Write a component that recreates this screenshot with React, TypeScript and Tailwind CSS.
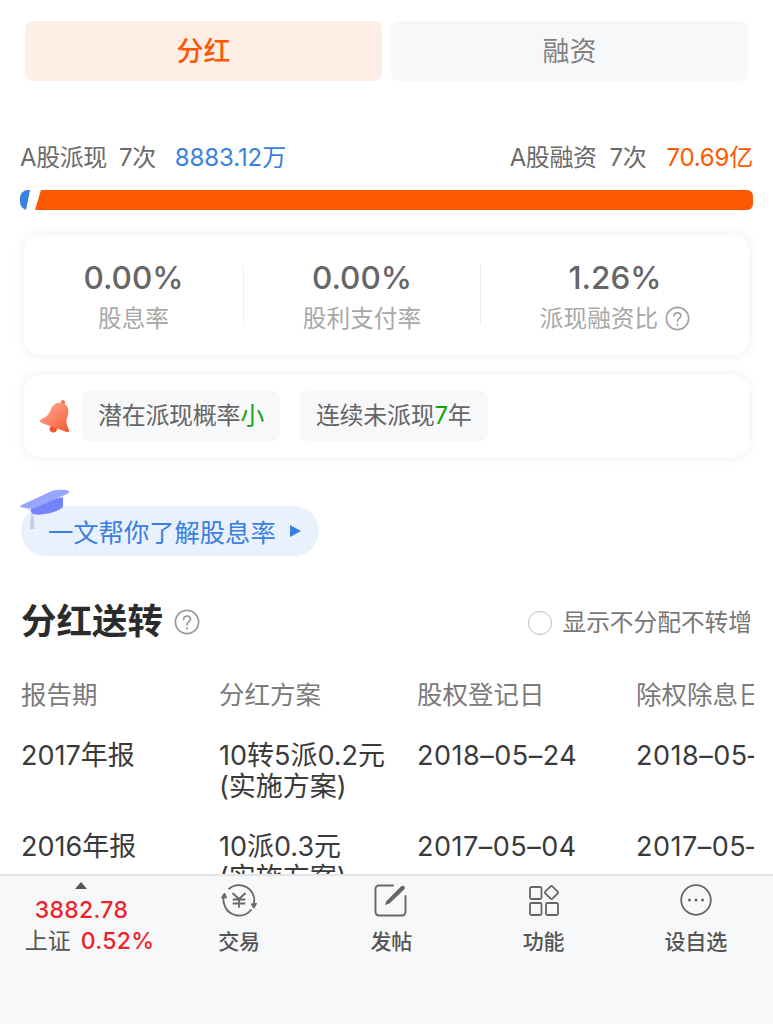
import React from "react";

const FONT = "[font-family:Inter,'Noto_Sans_CJK_SC',sans-serif]";

function Help({ size = 26, color = "#a3a3a3" }: { size?: number; color?: string }) {
  return (
    <svg width={size} height={size} viewBox="0 0 26 26" fill="none" className="shrink-0">
      <circle cx="13" cy="13" r="11.6" stroke={color} strokeWidth="1.7" />
      <path d="M9.6 10.4c0-2 1.5-3.3 3.5-3.3s3.4 1.2 3.4 3c0 1.4-.8 2.1-1.8 2.8-1 .7-1.6 1.2-1.6 2.500v.6" stroke={color} strokeWidth="1.7" strokeLinecap="round" />
      <circle cx="13" cy="19.4" r="1.1" fill={color} />
    </svg>
  );
}

function Bell() {
  return (
    <svg width="36" height="36" viewBox="0 0 36 36" className="shrink-0">
      <defs>
        <linearGradient id="bellG" x1="0" y1="0.2" x2="1" y2="0.7">
          <stop offset="0" stopColor="#ffa68e" />
          <stop offset="1" stopColor="#f4613a" />
        </linearGradient>
      </defs>
      <g transform="translate(1 0) rotate(20 18 18)">
        <circle cx="18" cy="31.500" r="3.800" fill="#ec5a30" />
        <circle cx="18" cy="3.500" r="2.200" fill="#f47a5a" />
        <path d="M18 4.500c-6.500 0-9 4.800-9 10.500 0 5-1.500 8-4.500 10.500-1.500 1.300-2 2-2 3 0 1.200 1 1.500 2 1.500h27c1 0 2-.3 2-1.500 0-1-.5-1.700-2-3-3-2.500-4.500-5.500-4.500-10.500 0-5.700-2.500-10.500-8.500-10.500Z" fill="url(#bellG)" />
      </g>
    </svg>
  );
}

function Hat() {
  return (
    <svg width="50" height="42" viewBox="0 0 50 42" className="absolute left-0 top-0">
      <path d="M5 17 12 23V29" stroke="#c3cbf5" strokeWidth="1.200" fill="none" />
      <path d="M10.800 27h2.800l1.200 13H9.800Z" fill="#c6cfe8" />
      <path d="M11 15 43 8v10c-4 4.500-19 8.500-28 7.500-2.500-.3-3.500-1.500-4-3Z" fill="#7483fb" />
      <path d="M.5 16.500 33 1.500c5-1 11-1 15.500 0 .8 1 .5 2.200-.5 3L15 19c-4 .8-10 .3-14.500-1-.5-.5-.5-1 0-1.500Z" fill="#97a5fd" />
    </svg>
  );
}

function TradeIcon() {
  return (
    <svg width="38" height="34" viewBox="0 0 38 34" fill="none" stroke="#666" strokeWidth="1.800" strokeLinecap="round" strokeLinejoin="round">
      <path d="M9 5.800A15.500 15.500 0 0 1 33.800 13.500 15 15 0 0 1 34 20" />
      <path d="M31 27A15.500 15.500 0 0 1 4 20.500 15 15 0 0 1 3.800 13" />
      <path d="M1.500 14.500 4.500 10 6.500 14.500Z" fill="#666" strokeWidth="1" />
      <path d="M31.500 21 36.500 20.500 34 25Z" fill="#666" strokeWidth="1" />
      <path d="M13 10.500 19 16l6-5.500M19 16v8M13.500 16.500h11M13.500 20.500h11" />
    </svg>
  );
}

function EditIcon() {
  return (
    <svg width="34" height="34" viewBox="0 0 34 34" fill="none" stroke="#666" strokeWidth="1.900" strokeLinecap="round">
      <path d="M19 2.500H5A3.500 3.500 0 0 0 1.500 6v23A3.500 3.500 0 0 0 5 32.500h23a3.500 3.500 0 0 0 3.500-3.500V13" />
      <path d="M11 22 12.500 18 27 3.500c1-1 2.500-1 3.300-.2.800.8.800 2.200-.2 3.200L15.500 20.500Z" fill="#666" stroke="none" />
    </svg>
  );
}

function GridIcon() {
  return (
    <svg width="32" height="32" viewBox="0 0 32 32" fill="none" stroke="#666" strokeWidth="1.800">
      <rect x="2" y="3" width="11.500" height="12" rx="1.500" />
      <rect x="2" y="19" width="11.500" height="12" rx="1.500" />
      <rect x="18" y="19" width="12" height="12" rx="1.500" />
      <rect x="-5" y="-5" width="10" height="10" rx="1.200" transform="translate(23.500 8.500) rotate(45)" />
    </svg>
  );
}

function DotsIcon() {
  return (
    <svg width="34" height="34" viewBox="0 0 34 34" fill="none">
      <circle cx="17" cy="17" r="14.800" stroke="#666" strokeWidth="1.800" />
      <circle cx="10.500" cy="17" r="1.500" fill="#666" />
      <circle cx="17" cy="17" r="1.500" fill="#666" />
      <circle cx="23.500" cy="17" r="1.500" fill="#666" />
    </svg>
  );
}

function Stat({ value, label, help }: { value: string; label: string; help?: boolean }) {
  return (
    <div className="flex flex-col items-center pt-[5px]">
      <div className="text-[31.500px] leading-[38px] font-medium text-[#666]">{value}</div>
      <div className="mt-[4px] flex items-center gap-[7px] text-[23.700px] leading-[36px] text-[#a8a8a8]">
        {label}
        {help && <Help size={25} />}
      </div>
    </div>
  );
}

function Row({ cols, second }: { cols: string[]; second: string }) {
  return (
    <div className="grid grid-cols-[198px_198px_219px_160px] text-[27px] leading-[31px] text-[#3a3a3a] whitespace-nowrap">
      <div>{cols[0]}</div>
      <div>
        <div>{cols[1]}</div>
        <div>{second}</div>
      </div>
      <div className="tracking-[0.5px]">{cols[2]}</div>
      <div className="tracking-[0.5px]">{cols[3]}</div>
    </div>
  );
}

function NavItem({ icon, label }: { icon: React.ReactNode; label: string }) {
  return (
    <div className="flex flex-1 flex-col items-center">
      <div className="flex h-[36px] items-center justify-center">{icon}</div>
      <div className="mt-[11px] text-[21px] leading-[26px] font-medium text-[#555]">{label}</div>
    </div>
  );
}

export default function App() {
  return (
    <div className={`${FONT} flex h-[1024px] w-[773px] flex-col overflow-hidden bg-white`}>
      <main className="min-h-0 flex-1 overflow-hidden">
        <div className="flex gap-[9px] px-[25px] pt-[21px]">
          <div className="flex h-[60px] w-[357px] items-center justify-center rounded-[8px] bg-[#feeee5] pt-[3px] text-[27px] font-medium text-[#fd5802]">分红</div>
          <div className="flex h-[60px] w-[357px] items-center justify-center rounded-[8px] bg-[#f7f8fa] pt-[3px] text-[27px] text-[#808080]">融资</div>
        </div>

        <div className="mt-[59px] flex justify-between px-[20px] text-[24px] leading-[36px] tracking-[-0.4px] text-[#6b6b6b]">
          <div className="flex">
            <span>A股派现</span>
            <span className="ml-[12px]">7次</span>
            <span className="ml-[19px] tracking-[-0.1px] text-[#3a80e2]">8883.12万</span>
          </div>
          <div className="flex">
            <span>A股融资</span>
            <span className="ml-[13px]">7次</span>
            <span className="ml-[20px] tracking-[-0.2px] text-[#fd5802]">70.69亿</span>
          </div>
        </div>

        <div className="relative mx-[20px] mt-[14px] h-[20px]">
          <div className="absolute inset-y-0 left-0 w-[10px] rounded-l-[8px] bg-[#3a80e2] [clip-path:polygon(0_0,100%_0,60%_100%,0_100%)]" />
          <div className="absolute inset-y-0 left-[15px] right-0 rounded-r-[6px] bg-[#fd5802] [clip-path:polygon(6px_0,100%_0,100%_100%,0_100%)]" />
        </div>

        <div className="mx-[24px] mt-[25px] grid h-[120px] grid-cols-[220px_237px_268px] items-center rounded-[16px] bg-white shadow-[0_0_14px_rgba(0,0,0,0.07)]">
          <div className="flex h-[60px] items-center justify-center border-r border-[#f0f0f0]">
            <Stat value="0.00%" label="股息率" />
          </div>
          <div className="flex h-[60px] items-center justify-center border-r border-[#eeeeee]">
            <Stat value="0.00%" label="股利支付率" />
          </div>
          <div className="flex h-[60px] items-center justify-center">
            <Stat value="1.26%" label="派现融资比" help />
          </div>
        </div>

        <div className="mx-[24px] mt-[20px] flex h-[82px] items-center rounded-[16px] bg-white pl-[15px] shadow-[0_0_14px_rgba(0,0,0,0.07)]">
          <Bell />
          <div className="ml-[7px] flex h-[50px] items-center rounded-[8px] bg-[#f7f8fa] px-[16px] text-[24px] tracking-[-0.3px] text-[#666]">
            潜在派现概率<span className="text-[#16a30f]">小</span>
          </div>
          <div className="ml-[20px] flex h-[50px] items-center rounded-[8px] bg-[#f7f8fa] pl-[16px] pr-[17px] text-[24px] tracking-[-0.3px] text-[#666]">
            连续未派现<span className="text-[#16a30f]">7</span>年
          </div>
        </div>

        <div className="relative ml-[20px] mt-[32px] h-[67px] w-[300px]">
          <div className="absolute bottom-0 left-[1px] flex h-[50px] w-[298px] items-center rounded-full bg-[#e9f1fd] pl-[27px] text-[25.300px] text-[#3a80e2]">
            <span className="pt-[4px]">一文帮你了解股息率</span>
            <svg width="11" height="12" viewBox="0 0 11 12" className="ml-[14px]">
              <path d="M0 0 11 6 0 12Z" fill="#3a80e2" />
            </svg>
          </div>
          <Hat />
        </div>

        <div className="mt-[42px] flex items-center justify-between pl-[21px] pr-[21px]">
          <div className="flex items-center gap-[11px]">
            <span className="text-[35.500px] leading-[48px] font-bold text-[#2b2b2b]">分红送转</span>
            <Help color="#9a9a9a" />
          </div>
          <div className="flex items-center gap-[10px] pt-[2px] text-[23.700px] text-[#777]">
            <span className="h-[24px] w-[24px] rounded-full border-[1.5px] border-[#bbbbbb]" />
            显示不分配不转增
          </div>
        </div>

        <div className="mt-[31px] w-[754px] overflow-hidden pl-[21px]">
          <div className="grid grid-cols-[198px_198px_219px_160px] text-[25.500px] leading-[36px] text-[#7a7a7a] whitespace-nowrap">
            <div>报告期</div>
            <div>分红方案</div>
            <div>股权登记日</div>
            <div>除权除息日</div>
          </div>
          <div className="mt-[27px] flex flex-col gap-[29px]">
            <Row cols={["2017年报", "10转5派0.2元", "2018–05–24", "2018–05–24"]} second="(实施方案)" />
            <Row cols={["2016年报", "10派0.3元", "2017–05–04", "2017–05–04"]} second="(实施方案)" />
          </div>
        </div>
      </main>

      <footer className="flex h-[150px] shrink-0 border-t-2 border-[#e3e5e8] bg-[#f7f8fa] pt-[6px]">
        <div className="relative flex w-[163px] flex-col items-center pt-[16px]">
          <div className="absolute left-[75px] top-0 h-0 w-0 border-x-[6.5px] border-b-[7px] border-x-transparent border-b-[#555]" />
          <div className="text-[23px] leading-[24px] font-medium tracking-[0.3px] text-[#ee2228]">3882.78</div>
          <div className="ml-[16px] mt-[4px] flex items-center text-[23px] leading-[30px] font-medium text-[#555] whitespace-nowrap">
            <span className="font-normal">上证</span>
            <span className="ml-[10px] tracking-[0.3px] text-[#ee2228]">0.52%</span>
          </div>
        </div>
        <div className="flex flex-1 pr-[1px]">
          <NavItem icon={<TradeIcon />} label="交易" />
          <NavItem icon={<EditIcon />} label="发帖" />
          <NavItem icon={<GridIcon />} label="功能" />
          <NavItem icon={<DotsIcon />} label="设自选" />
        </div>
      </footer>
    </div>
  );
}
